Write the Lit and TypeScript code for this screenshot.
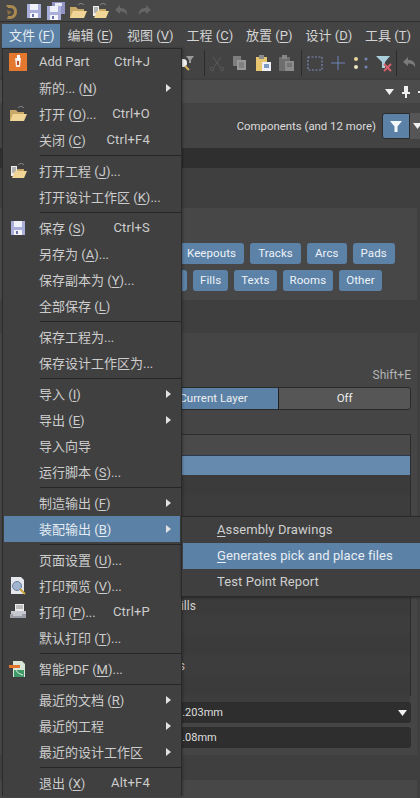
import { LitElement, css, html } from "lit";
import { customElement } from "lit/decorators.js";

type Item = { label?: string; keys?: string; sub?: boolean; icon?: string; on?: boolean };

const ic = (body: unknown, size = 18) =>
  html`<svg width=${size} height=${size} viewBox="0 0 18 18">${body}</svg>`;

const save = () => ic(html`<svg viewBox="0 0 18 18">
  <path d="M2 2h14v14H2z" fill="#a9aedb"/><path d="M5 2h8v6H5z" fill="#eef0fa"/>
  <path d="M5 11h8v5H5z" fill="#f4f4fa"/><path d="M7 12h2v3H7z" fill="#6a70a8"/>
</svg>`);

const saveAll = () => ic(html`<svg viewBox="0 0 18 18">
  <path d="M5 0h13v12H5z" fill="#8f94c4"/><path d="M8 1h7v3H8z" fill="#e6e8f6"/>
  <path d="M0 4h14v14H0z" fill="#a9aedb"/><path d="M3 4h8v6H3z" fill="#eef0fa"/>
  <path d="M3 13h8v5H3z" fill="#f4f4fa"/><path d="M5 14h2v3H5z" fill="#6a70a8"/>
</svg>`);

const folder = () => ic(html`<svg viewBox="0 0 18 18">
  <path d="M1 5h6l2 2h6v2H5L2 16H1z" fill="#c9a968"/>
  <path d="M4 9h14l-3 7H1z" fill="#f0d596"/>
  <path d="M9 3c2-2 4-2 6 0" fill="none" stroke="#8f8f8f"/>
</svg>`);

const openProject = () => ic(html`<svg viewBox="0 0 18 18">
  <path d="M2 4h6v10H2z" fill="#eeeeee"/><path d="M3 6h4M3 8h4M3 10h4" stroke="#777"/>
  <path d="M8 7h7v2H8z" fill="#c9a968"/><path d="M6 9h12l-3 7H3z" fill="#f0d596"/>
  <path d="M9 3c2-2 4-2 6 0" fill="none" stroke="#8f8f8f"/>
</svg>`);

const undo = (c = "#666") => ic(html`<svg viewBox="0 0 18 18">
  <path d="M7 3L2 8l5 4V9.500c4 0 6 1 7 4 1-5-2-7.500-7-7.500z" fill=${c}/>
</svg>`);

const redo = () => ic(html`<svg viewBox="0 0 18 18">
  <path d="M11 3l5 5-5 4V9.500c-4 0-6 1-7 4-1-5 2-7.500 7-7.500z" fill="#666"/>
</svg>`);

const logo = () => ic(html`<svg viewBox="0 0 20 20">
  <path d="M5 4h4c5 0 7 3 7 6.500S14 18 9 18H6l1-3h2c2.500 0 4-2 4-4.500S11.500 7 9 7H7z" fill="#a98a50"/>
  <path d="M6 9l5 2-4 3z" fill="#8a7040"/>
</svg>`, 20);

const addPart = () => ic(html`<svg viewBox="0 0 18 18">
  <path d="M0 0h18v18H0z" fill="#e4782f"/>
  <path d="M6 5h6l-1 9H7z" fill="#f7ece2"/><path d="M8 2h3v5H8z" fill="#fff"/>
  <path d="M8 8h2v4H8z" fill="#b9502a"/>
</svg>`);

const preview = () => ic(html`<svg viewBox="0 0 18 18">
  <path d="M2 0h10l3 3v14H2z" fill="#e4e6ee"/>
  <circle cx="8" cy="9" r="4.500" fill="#9fb4cf" stroke="#6c7f99"/>
  <path d="M11 12l5 5" stroke="#c9a53a" stroke-width="2"/>
</svg>`);

const printer = () => ic(html`<svg viewBox="0 0 18 18">
  <path d="M6 1h9v7H6z" fill="#eeeeee"/><path d="M7 3h7M7 5h7" stroke="#8a8a8a"/>
  <path d="M2 8h15v6H2z" fill="#c6c8d0"/><path d="M1 11h16v4H1z" fill="#9b9da8"/>
  <path d="M4 12h9" stroke="#f0f0f0"/>
</svg>`);

const pdf = () => ic(html`<svg viewBox="0 0 18 18">
  <path d="M4 1h9l3 3v13H4z" fill="#d8e6da"/><path d="M5 10h10v7H5z" fill="#3f9a68"/>
  <path d="M0 5h11v3H0z" fill="#e2742c"/><path d="M7 10c1 3 4 4 7 5" stroke="#d8efe0" fill="none"/>
</svg>`);

const magnifier = () => ic(html`<svg viewBox="0 0 18 18">
  <path d="M9 2h8l-3 4v3h-2V6z" fill="#9a9a9a"/>
  <circle cx="6" cy="9" r="4" fill="#f2f2f2"/><path d="M8 12l4 4" stroke="#d2b25a" stroke-width="2"/>
</svg>`);

const scissors = () => ic(html`<svg viewBox="0 0 18 18" fill="none" stroke="#5a5a5a" stroke-width="1">
  <path d="M5 3l7 10M13 3L6 13"/><circle cx="4" cy="15" r="1.800"/><circle cx="14" cy="15" r="1.800"/>
</svg>`);

const copy = () => ic(html`<svg viewBox="0 0 18 18">
  <path d="M2 2h8v10H2z" fill="#7e7e7e"/><path d="M6 6h9v10H6z" fill="#989898"/>
  <path d="M8 9h5M8 11h5M8 13h5" stroke="#6a6a6a"/>
</svg>`);

const paste = () => ic(html`<svg viewBox="0 0 18 18">
  <path d="M2 3h11v14H2z" fill="#e6c56e"/><path d="M5 1h5v4H5z" fill="#8d8d8d"/>
  <path d="M8 8h9v9H8z" fill="#eef0fa"/><path d="M10 11h5M10 13h5" stroke="#5a7fb8" stroke-width="1.400"/>
</svg>`);

const pasteGrey = () => ic(html`<svg viewBox="0 0 18 18">
  <path d="M2 3h11v14H2z" fill="#6e6e6e"/><path d="M5 1h5v4H5z" fill="#868686"/>
  <path d="M8 7h9v10H8z" fill="#8c8c8c"/><path d="M10 10h5M10 12h5" stroke="#5e5e5e"/>
</svg>`);

const selectRect = () => ic(html`<svg viewBox="0 0 18 18">
  <path d="M2 3h14v13H2z" fill="none" stroke="#7f87b8" stroke-width="1.200" stroke-dasharray="2 1.500"/>
</svg>`);

const cross = () => ic(html`<svg viewBox="0 0 18 18">
  <path d="M9 2v14M2 9h14" stroke="#6f86bb"/>
</svg>`);

const dots = () => ic(html`<svg viewBox="0 0 18 18">
  <circle cx="4" cy="5" r="2" fill="#e9d79a"/><circle cx="4" cy="13" r="2" fill="#eee6c8"/>
  <circle cx="14" cy="5" r="1.500" fill="#7488b8"/><circle cx="14" cy="13" r="1.500" fill="#7488b8"/>
</svg>`);

const filterX = () => ic(html`<svg viewBox="0 0 18 18">
  <path d="M1 2h14l-5 6v6H7V8z" fill="#a9cfdc"/>
  <path d="M9 10l7 7M16 10l-7 7" stroke="#d9606a" stroke-width="2"/>
</svg>`);

const funnel = () => html`<svg width="14" height="14" viewBox="0 0 14 14">
  <path d="M1 2h12L8.500 7.500V13h-3V7.500z" fill="#f4f7fa"/>
</svg>`;

const caret = () => html`<svg width="9" height="6" viewBox="0 0 9 6"><path d="M0 0h9L4.500 6z" fill="#f0f0f0"/></svg>`;

const pin = () => html`<svg width="10" height="12" viewBox="0 0 10 12">
  <path d="M3 0h4v6h2v2H6v4H4V8H1V6h2z" fill="#efefef"/>
</svg>`;

const icons: Record<string, () => unknown> = {
  addPart, folder, openProject, save, preview, printer, pdf,
};

const menu: Item[] = [
  { label: "Add Part", keys: "Ctrl+J", icon: "addPart" },
  { label: "新的... (&N)", sub: true },
  { label: "打开 (&O)...", keys: "Ctrl+O", icon: "folder" },
  { label: "关闭 (&C)", keys: "Ctrl+F4" },
  {},
  { label: "打开工程 (&J)...", icon: "openProject" },
  { label: "打开设计工作区 (&K)..." },
  {},
  { label: "保存 (&S)", keys: "Ctrl+S", icon: "save" },
  { label: "另存为 (&A)..." },
  { label: "保存副本为 (&Y)..." },
  { label: "全部保存 (&L)" },
  {},
  { label: "保存工程为..." },
  { label: "保存设计工作区为..." },
  {},
  { label: "导入 (&I)", sub: true },
  { label: "导出 (&E)", sub: true },
  { label: "导入向导" },
  { label: "运行脚本 (&S)..." },
  {},
  { label: "制造输出 (&F)", sub: true },
  { label: "装配输出 (&B)", sub: true, on: true },
  {},
  { label: "页面设置 (&U)..." },
  { label: "打印预览 (&V)...", icon: "preview" },
  { label: "打印 (&P)...", keys: "Ctrl+P", icon: "printer" },
  { label: "默认打印 (&T)..." },
  {},
  { label: "智能PDF (&M)...", icon: "pdf" },
  {},
  { label: "最近的文档 (&R)", sub: true },
  { label: "最近的工程", sub: true },
  { label: "最近的设计工作区", sub: true },
  {},
  { label: "退出 (&X)", keys: "Alt+F4" },
];

const menubar = ["文件 (&F)", "编辑 (&E)", "视图 (&V)", "工程 (&C)", "放置 (&P)", "设计 (&D)", "工具 (&T)"];
const rows = ["", "", "", "", "", "", "Drills", "", "", "Pads", "", ""];

// "&" marks the access key, which is drawn underlined
const mnemonic = (s: string) => {
  const [a, b] = s.split("&");
  if (b === undefined) return a;
  return html`${a}<u>${b[0]}</u>${b.slice(1)}`;
};

@customElement("app-root")
export class AppRoot extends LitElement {
  static styles = css`
    :host {
      display: block;
      position: relative;
      width: 420px;
      height: 798px;
      overflow: hidden;
      background: #3f3f3f;
      color: #d4d4d4;
      font: 13px Roboto, "Noto Sans CJK SC", sans-serif;
    }
    u { text-underline-offset: 2px; }
    svg { display: block; flex: none; }

    .title { display: flex; align-items: center; gap: 4px; height: 22px; padding-left: 1px; background: #484848; border-bottom: 1px solid #2e2e2e; box-sizing: border-box; }

    .menubar { display: flex; height: 26px; padding: 2px 0 0 2px; background: #444; box-sizing: border-box; white-space: nowrap; }
    .menubar div { flex: none; width: 59.5px; padding-left: 7px; box-sizing: border-box; line-height: 24px; }
    .menubar .on { width: 58px; background: #5b81a6; color: #e6edf4; }
    .menubar .on + div { margin-left: 0.5px; }

    .toolbar { display: flex; align-items: center; height: 30px; padding-left: 177px; background: #434343; }
    .grp { display: flex; gap: 5px; align-items: center; height: 26px; border-right: 1px solid #2c2c2c; }
    .grp.a { padding-right: 9px; }
    .grp.b { padding: 0 6px 0 3px; }
    .grp.c { padding: 0 3px 0 4px; }
    .grp.d { border: none; padding-left: 4px; }

    .tabhead { display: flex; justify-content: flex-end; align-items: center; gap: 7px; height: 23px; margin-top: 2px; background: #4c4c4c; }
    .tabhead i { width: 2px; height: 2px; background: #eee; }

    .filter { display: flex; justify-content: flex-end; align-items: center; height: 45px; background: #434343; font-size: 11.400px; color: #dcdcdc; }
    .filter span { margin-right: 6px; }
    .fbtn { display: flex; align-items: center; justify-content: center; width: 28px; height: 26px; background: #5b81a6; border: 1px solid #2c2c2c; border-radius: 3px 0 0 3px; box-sizing: border-box; }
    .fdrop { display: flex; align-items: center; width: 10px; height: 26px; padding-left: 3px; box-sizing: border-box; background: #565656; overflow: hidden; }

    .strip { height: 20px; background: #2f2f2f; }
    .gap1 { height: 40px; }

    .chips { display: flex; flex-direction: column; gap: 6px; height: 92px; margin-right: 3px; padding-top: 35px; box-sizing: border-box; background: #474747; }
    .chiprow { display: flex; gap: 6px; white-space: nowrap; }
    .chiprow.r1 { padding-left: 179px; }
    .chiprow.r2 { padding-left: 126px; }
    .chip { height: 21px; line-height: 20px; padding: 0 8px; border-radius: 3px; background: #5c82a8; color: #eef2f6; font-size: 11.500px; letter-spacing: 0.1px; }
    .r2 .chip { padding: 0 7px; }
    .r2 .stub { width: 47px; }
    .gap2 { height: 33px; }

    .card { display: flex; flex-direction: column; height: 422px; margin-right: 3px; padding: 35px 6px 0 17px; box-sizing: border-box; background: #454545; }
    .shift { height: 19px; line-height: 14px; text-align: right; font-size: 12px; color: #b4b4b4; }
    .seg { display: grid; grid-template-columns: repeat(3, 1fr); height: 23px; border: 1px solid #2a2a2a; border-radius: 3px; box-sizing: border-box; font-size: 11.500px; line-height: 21px; text-align: center; color: #eee; overflow: hidden; background: #565656; }
    .seg .cur { background: #5b81a6; border-right: 1px solid #222; }
    .table { height: 262px; margin-top: 24px; border: 1px solid #2c2c2c; box-sizing: border-box; background: #3b3b3b; }
    .thead { height: 20px; background: #4a4a4a; }
    .row { height: 20px; padding-left: 151px; box-sizing: border-box; font-size: 12px; line-height: 22px; color: #d0d0d0; }
    .row.tail { padding-left: 140px; }
    .row.sel { background: #668aae; border-top: 1px solid #2a3a4c; }
    .row:nth-child(even):not(.sel) { background: #3d3d3d; }
    .field { display: flex; justify-content: space-between; align-items: center; height: 21px; margin-top: 6px; padding: 0 4px 0 159px; border-radius: 3px; background: #2e2e2e; font-size: 11px; color: #dedede; }
    .field + .field { margin-top: 4px; }
    .gap3 { height: 25px; }
    .foot { height: 40px; background: #474747; margin-right: 3px; }

    .menu { position: absolute; left: 2px; top: 48px; width: 180px; background: #404040; border: 1px solid #2b2b2b; border-width: 1px 1px 0; box-sizing: border-box; box-shadow: 1px 0 2px #0004; }
    .mi { display: grid; grid-template-columns: 35px 1fr auto 16px 14px; align-items: center; height: 26px; padding-bottom: 1px; margin: 0 1px; box-sizing: border-box; white-space: nowrap; color: #cdcdcd; }
    .mi.on { background: #5b81a6; color: #e4ebf2; }
    .mi .ico { padding-left: 5px; }
    .mi .keys { letter-spacing: 0.2px; }
    .arrow { width: 0; height: 0; border: 4.500px solid transparent; border-left: 5px solid #e2e2e2; border-right: 0; }
    .msep { height: 5px; margin-left: 37px; position: relative; }
    .msep::after { content: ""; position: absolute; left: 0; right: 0; top: 2px; height: 1px; background: #262626; }

    .submenu { position: absolute; left: 181px; top: 516px; width: 239px; padding: 0 0 1px 1px; background: #3f3f3f; border: 1px solid #2b2b2b; border-right: 0; box-sizing: border-box; height: 81px; box-shadow: 0 1px 2px #0005; }
    .sub { height: 26px; padding-left: 34px; line-height: 26px; letter-spacing: 0.1px; color: #cfcfcf; white-space: nowrap; }
    .sub.on { background: #5b81a6; color: #e8eef4; }
  `;

  private menuRow(m: Item) {
    if (!m.label) return html`<div class="msep"></div>`;
    return html`<div class="mi ${m.on ? "on" : ""}">
      <div class="ico">${m.icon ? icons[m.icon]() : ""}</div>
      <div>${mnemonic(m.label)}</div>
      <div class="keys">${m.keys ?? ""}</div>
      <div></div>
      <div>${m.sub ? html`<div class="arrow"></div>` : ""}</div>
    </div>`;
  }

  render() {
    return html`
      <div class="title">
        ${logo()}
        ${save()}${saveAll()}${folder()}${openProject()}${undo()}${redo()}
      </div>
      <div class="menubar">
        ${menubar.map((m, i) => html`<div class=${i === 0 ? "on" : ""}>${mnemonic(m)}</div>`)}
      </div>
      <div class="toolbar">
        <div class="grp a">${magnifier()}</div>
        <div class="grp b">${scissors()}${copy()}${paste()}${pasteGrey()}</div>
        <div class="grp c">${selectRect()}${cross()}${dots()}${filterX()}</div>
        <div class="grp d">${undo("#7a7a7a")}</div>
      </div>
      <div class="tabhead">${caret()}${pin()}<i></i></div>
      <div class="filter">
        <span>Components (and 12 more)</span>
        <div class="fbtn">${funnel()}</div>
        <div class="fdrop">${caret()}</div>
      </div>
      <div class="strip"></div>
      <div class="gap1"></div>
      <div class="chips">
        <div class="chiprow r1">
          ${["Keepouts", "Tracks", "Arcs", "Pads"].map((c) => html`<div class="chip">${c}</div>`)}
        </div>
        <div class="chiprow r2">
          <div class="chip stub"></div>
          ${["Fills", "Texts", "Rooms", "Other"].map((c) => html`<div class="chip">${c}</div>`)}
        </div>
      </div>
      <div class="gap2"></div>
      <div class="card">
        <div class="shift">Shift+E</div>
        <div class="seg"><div></div><div class="cur">Current Layer</div><div>Off</div></div>
        <div class="table">
          <div class="thead"></div>
          <div class="row sel"></div>
          ${rows.map((r) => html`<div class="row ${r === "Pads" ? "tail" : ""}">${r}</div>`)}
        </div>
        <div class="field"><span>0.203mm</span>${caret()}</div>
        <div class="field"><span>0.08mm</span></div>
      </div>
      <div class="gap3"></div>
      <div class="foot"></div>

      <div class="menu">${menu.map((m) => this.menuRow(m))}</div>
      <div class="submenu">
        <div class="sub">${mnemonic("&Assembly Drawings")}</div>
        <div class="sub on">${mnemonic("&Generates pick and place files")}</div>
        <div class="sub">Test Point Report</div>
      </div>
    `;
  }
}
